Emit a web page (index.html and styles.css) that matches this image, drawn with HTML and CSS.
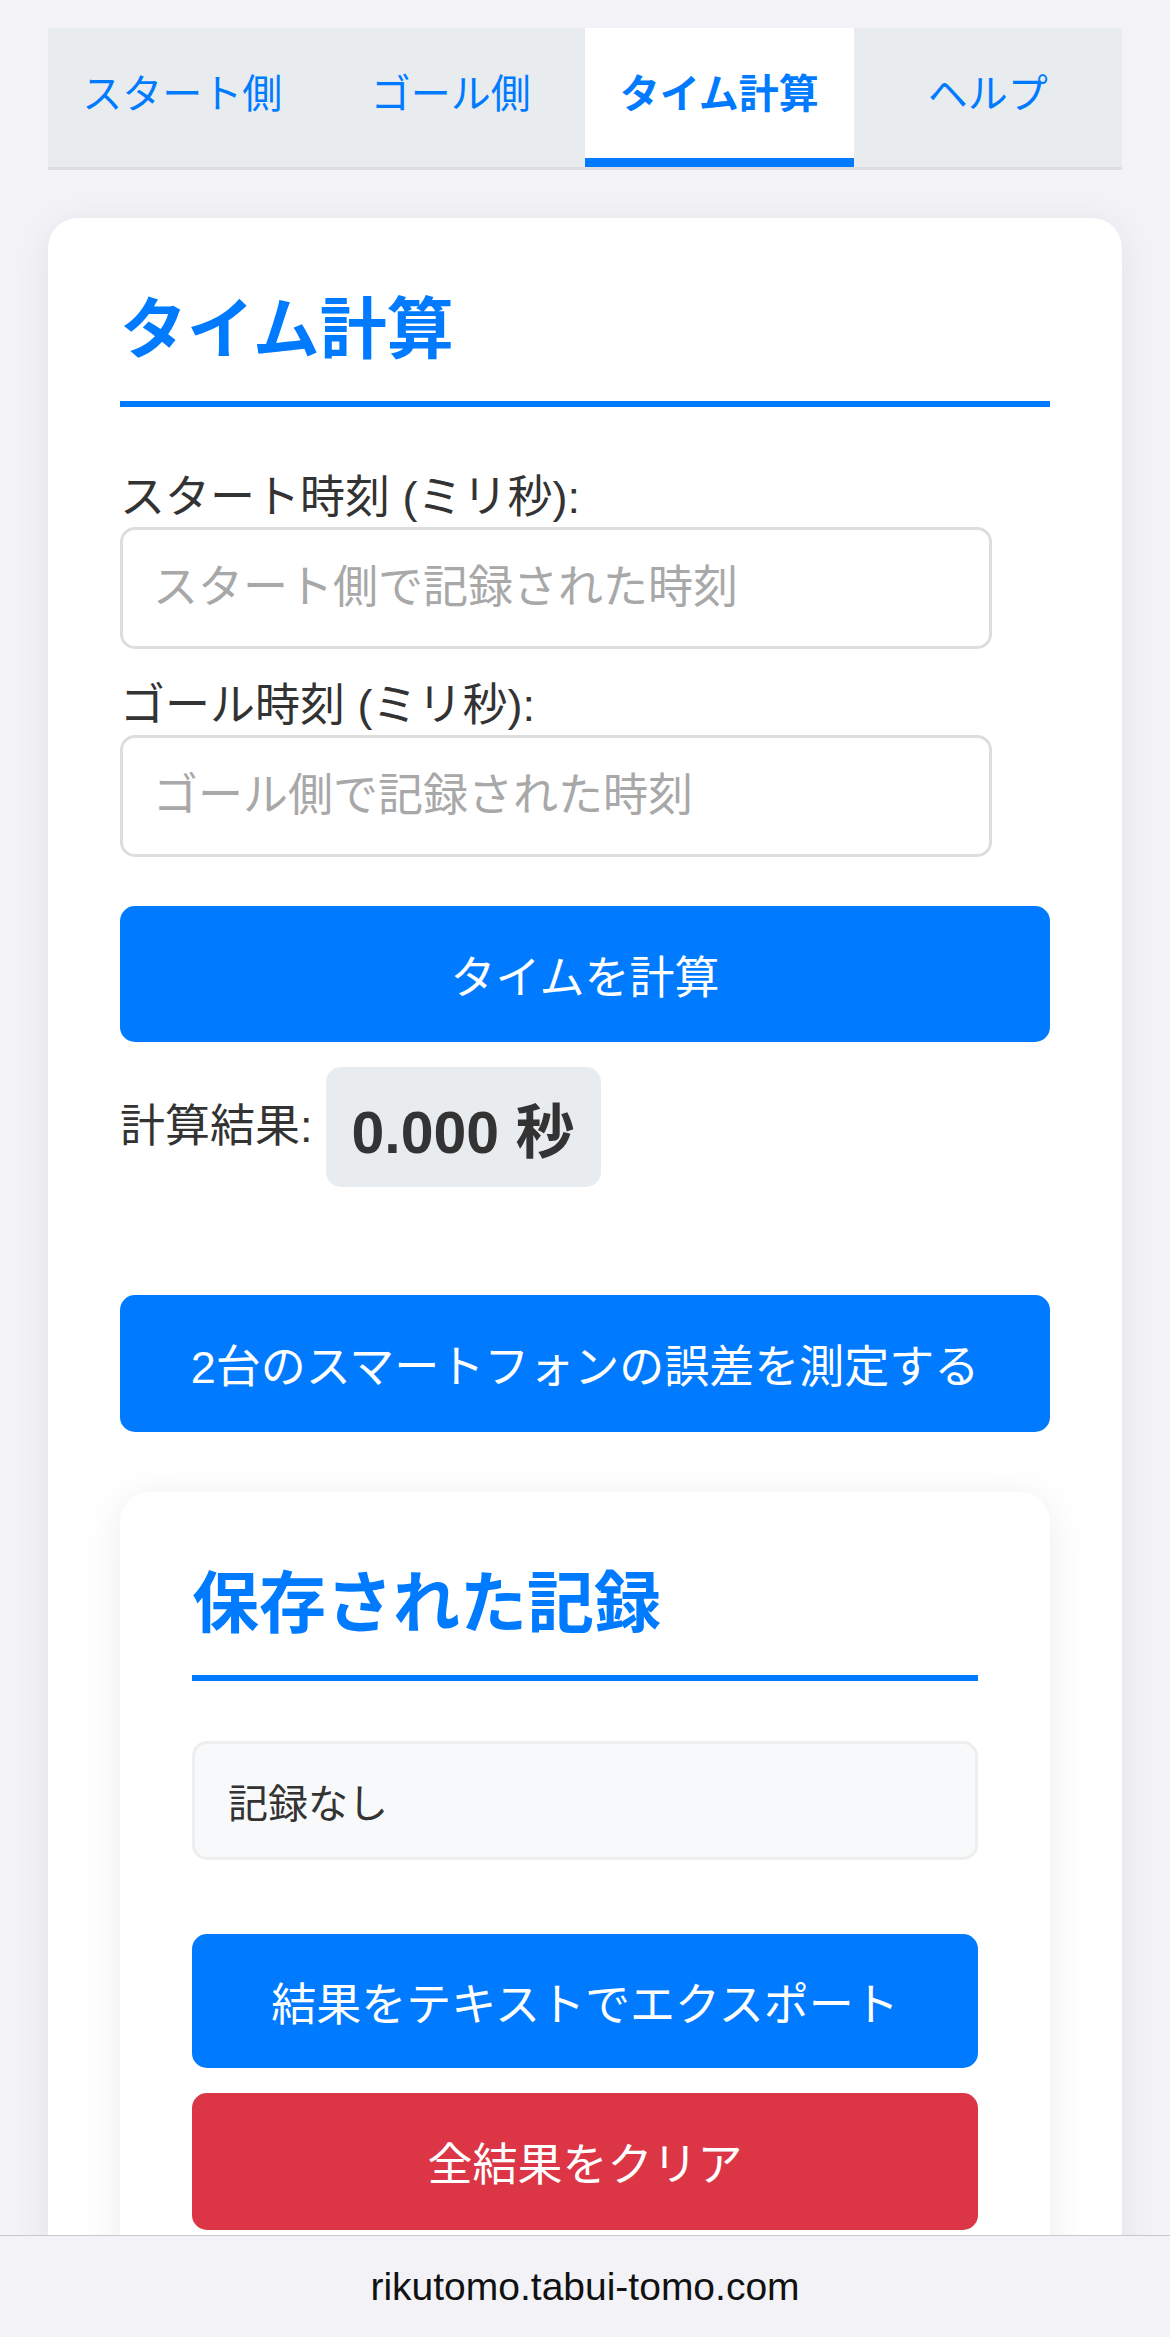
FILE: index.html
```html
<!DOCTYPE html>
<html lang="ja">
<head>
<meta charset="utf-8">
<title>タイム計算</title>
<link rel="stylesheet" href="styles.css">
</head>
<body>
<div class="page">
  <nav class="tabs">
    <div class="tab">スタート側</div>
    <div class="tab">ゴール側</div>
    <div class="tab active">タイム計算</div>
    <div class="tab">ヘルプ</div>
  </nav>

  <section class="card">
    <h2 class="title">タイム計算</h2>

    <label class="label first">スタート時刻 (ミリ秒):</label>
    <input class="field" type="text" placeholder="スタート側で記録された時刻">

    <label class="label">ゴール時刻 (ミリ秒):</label>
    <input class="field last" type="text" placeholder="ゴール側で記録された時刻">

    <button class="btn primary">タイムを計算</button>

    <div class="result">
      <span class="result-label">計算結果:</span>
      <span class="result-value">0.000 秒</span>
    </div>

    <button class="btn primary measure">2台のスマートフォンの誤差を測定する</button>

    <section class="card inner">
      <h2 class="title">保存された記録</h2>
      <div class="records">記録なし</div>
      <button class="btn primary export">結果をテキストでエクスポート</button>
      <button class="btn danger clear">全結果をクリア</button>
    </section>
  </section>
</div>

<footer class="footer">rikutomo.tabui-tomo.com</footer>
</body>
</html>
```

FILE: styles.css
```css
* {
  box-sizing: border-box;
}

html, body {
  margin: 0;
  padding: 0;
}

body {
  background: #f2f2f7;
  font-family: "Liberation Sans", "Noto Sans CJK JP", sans-serif;
  color: #333;
}

.page {
  padding: 28px 48px 200px;
}

.tabs {
  display: flex;
  height: 142px;
  background: #e9ecef;
  border-bottom: 3px solid #ddd;
}

.tab {
  flex: 1;
  display: flex;
  align-items: center;
  justify-content: center;
  font-size: 40px;
  line-height: 1.2;
  color: #007bff;
  border-bottom: 9px solid transparent;
  padding-top: 2px;
}

.tab.active {
  background: #fff;
  font-weight: bold;
  border-bottom-color: #007bff;
}

.card {
  margin-top: 48px;
  background: #fff;
  border-radius: 30px;
  padding: 72px 72px 120px;
  box-shadow: 0 6px 36px rgba(0, 0, 0, 0.07);
}

.title {
  margin: 0;
  font-size: 67px;
  line-height: 79px;
  font-weight: bold;
  color: #007bff;
  padding-bottom: 32px;
  border-bottom: 6px solid #007bff;
}

.label {
  display: block;
  font-size: 45px;
  line-height: 58px;
  color: #333;
}

.label.first {
  margin-top: 62px;
}

.field {
  display: block;
  width: 872px;
  height: 122px;
  margin: 0 0 28px;
  padding: 0 30px;
  border: 3px solid #ddd;
  border-radius: 15px;
  font-family: inherit;
  font-size: 45px;
  color: #333;
  background: #fff;
}

.field::placeholder {
  color: #a8a8a8;
}

.field.last {
  margin-bottom: 49px;
}

.btn {
  display: block;
  width: 100%;
  height: 136px;
  border: none;
  border-radius: 15px;
  font-family: inherit;
  font-size: 45px;
  color: #fff;
  padding: 0;
}

.btn.primary {
  background: #007bff;
}

.btn.danger {
  background: #dc3545;
}

.result {
  display: flex;
  align-items: center;
  margin-top: 25px;
  gap: 13px;
}

.result-label {
  font-size: 45px;
  line-height: 58px;
}

.result-value {
  display: flex;
  align-items: center;
  height: 120px;
  padding: 0 26px;
  background: #e9ecef;
  border-radius: 15px;
  font-size: 59px;
  font-weight: bold;
  color: #333;
}

.measure {
  margin-top: 108px;
  height: 137px;
}

.card.inner {
  margin-top: 60px;
  padding: 72px 72px 100px;
  box-shadow: 0 6px 40px rgba(0, 0, 0, 0.08);
}

.records {
  margin-top: 60px;
  height: 119px;
  display: flex;
  align-items: center;
  padding: 0 33px;
  background: #f8f9fa;
  border: 3px solid #eee;
  border-radius: 15px;
  font-size: 40px;
  color: #333;
}

.export {
  margin-top: 74px;
  height: 134px;
}

.clear {
  margin-top: 25px;
  height: 137px;
}

.footer {
  position: fixed;
  left: 0;
  right: 0;
  bottom: 0;
  height: 102px;
  display: flex;
  align-items: center;
  justify-content: center;
  background: #f2f2f7;
  border-top: 1px solid #c8c8cc;
  font-size: 39px;
  color: #111;
}
```
